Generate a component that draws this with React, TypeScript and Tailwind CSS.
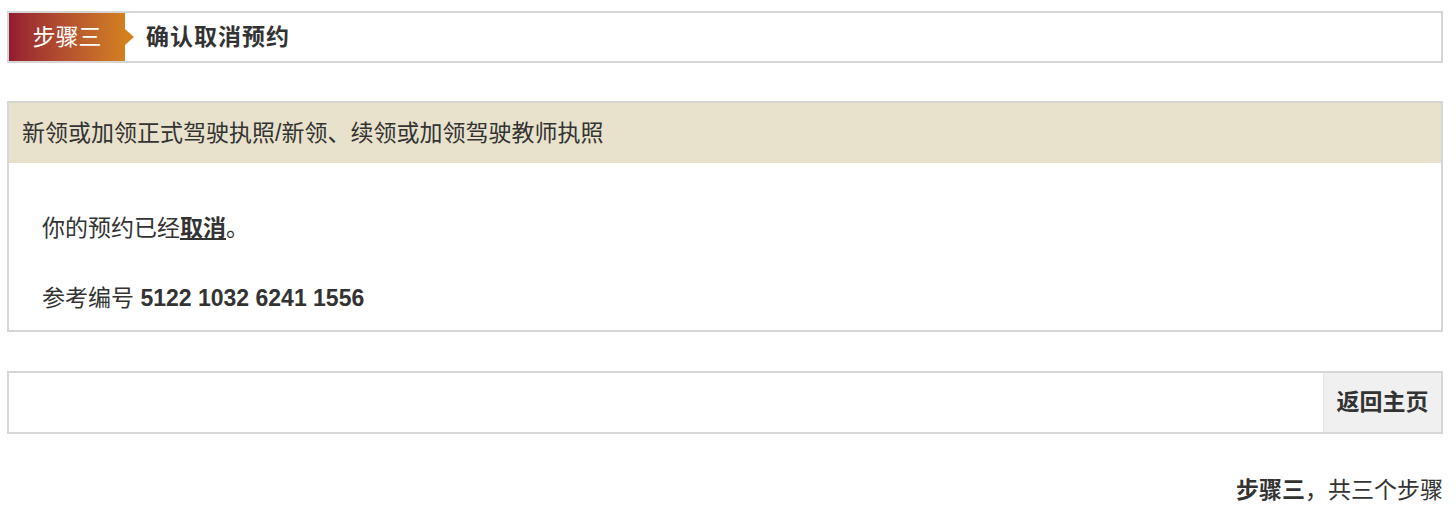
const cjk = { fontFamily: '"Liberation Sans", "Noto Sans CJK SC", sans-serif' };

function StepHeader() {
  return (
    <div className="flex h-[52px] items-stretch border-2 border-[#d6d6d6] bg-white">
      <div className="relative flex w-[116px] items-center justify-center bg-gradient-to-r from-[#951c30] to-[#d3801f] text-[23px] text-white">
        步骤三
        <span className="absolute right-[-9px] top-1/2 h-0 w-0 -translate-y-1/2 border-y-[8px] border-l-[9px] border-y-transparent border-l-[#d3801f]" />
      </div>
      <div className="flex items-center pl-[21px] text-[23px] font-bold tracking-[1px] text-[#333]">
        确认取消预约
      </div>
    </div>
  );
}

export default function App() {
  return (
    <div className="min-h-screen bg-white pl-[7px] pr-[13px] pt-[11px] text-[#333]" style={cjk}>
      <StepHeader />

      <div className="mt-[38px] border-2 border-[#d6d6d6]">
        <div className="flex h-[60px] items-center bg-[#e8e2cc] pl-[13px] text-[23px]">
          新领或加领正式驾驶执照/新领、续领或加领驾驶教师执照
        </div>
        <div className="h-[167px] pl-[33px] pt-[50px] text-[23px] leading-[30px]">
          <p>
            你的预约已经<span className="font-bold underline underline-offset-2">取消</span>。
          </p>
          <p className="mt-[40px]">
            参考编号 <span className="text-[23px] font-bold">5122 1032 6241 1556</span>
          </p>
        </div>
      </div>

      <div className="mt-[39px] flex h-[63px] justify-end border-2 border-[#d6d6d6] bg-white">
        <button className="w-[118px] border-l border-[#e6e6e6] bg-[#f0f0f0] text-[23px] font-bold text-[#333]">
          返回主页
        </button>
      </div>

      <div className="mt-[41px] text-right text-[23px] leading-[30px]">
        <span className="font-bold">步骤三</span>，共三个步骤
      </div>
    </div>
  );
}
